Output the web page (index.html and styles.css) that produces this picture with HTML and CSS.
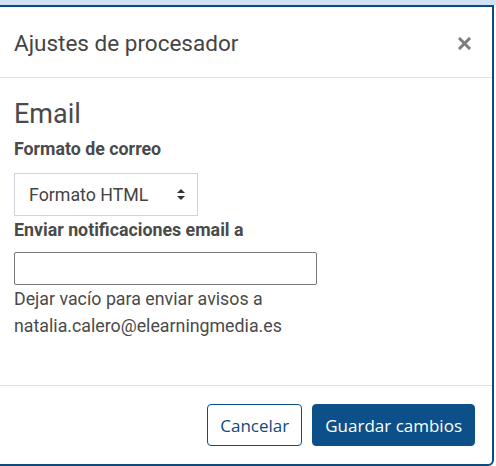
FILE: index.html
```html
<!DOCTYPE html>
<html lang="es">
<head>
  <meta charset="UTF-8">
  <title>Ajustes de procesador</title>
  <link rel="stylesheet" href="styles.css">
</head>
<body>
  <div class="modal">
    <div class="modal-header">
      <h5 class="modal-title">Ajustes de procesador</h5>
      <button class="close" aria-label="Cerrar">
        <svg width="13" height="13" viewBox="0 0 13 13"><path d="M2 2 L11 11 M11 2 L2 11" stroke="#7d7d7d" stroke-width="3" stroke-linecap="square"/></svg>
      </button>
    </div>
    <div class="modal-body">
      <h3 class="section">Email</h3>
      <label class="label" for="formato">Formato de correo</label>
      <div class="select">
        <span>Formato HTML</span>
        <svg width="8" height="11" viewBox="0 0 8 11"><path d="M4 0 L8 4 H0 Z M4 11 L8 7 H0 Z" fill="#333"/></svg>
      </div>
      <label class="label" for="email">Enviar notificaciones email a</label>
      <input class="input" type="text" id="email">
      <p class="help">Dejar vacío para enviar avisos a<br>natalia.calero@elearningmedia.es</p>
    </div>
    <div class="modal-footer">
      <button class="btn btn-outline">Cancelar</button>
      <button class="btn btn-primary">Guardar cambios</button>
    </div>
  </div>
</body>
</html>
```
FILE: styles.css
```css
body {
  margin: 0;
  background: #fff;
  border-top: 5px solid #cfe1f3;
  font-family: Roboto, "Liberation Sans", sans-serif;
  color: #4a4a4a;
}

.modal {
  box-sizing: border-box;
  width: 496px;
  height: 461px;
  margin-left: -2px;
  border: 2px solid #0d4a7e;
  border-radius: 0 0 6px 0;
  background: #fff;
  display: flex;
  flex-direction: column;
}

.modal-header {
  display: flex;
  align-items: center;
  justify-content: space-between;
  height: 70px;
  padding: 0 21px 0 14px;
  border-bottom: 1px solid #dee2e6;
}

.modal-title {
  margin: 1px 0 0;
  font-size: 22.5px;
  font-weight: 400;
  color: #444;
}

.close {
  border: 0;
  background: none;
  padding: 0;
  display: flex;
  margin-top: 3px;
}

.modal-body {
  flex: 1;
  padding: 20px 14px 0;
}

.section {
  margin: 0 0 8px;
  font-size: 27px;
  font-weight: 400;
  line-height: 32px;
  color: #4a4a4a;
}

.label {
  display: block;
  font-size: 17.8px;
  font-weight: 700;
  line-height: 22px;
  color: #4a4a4a;
}

.select {
  box-sizing: border-box;
  width: 184px;
  height: 43px;
  margin: 13px 0 3px;
  padding: 0 12px 0 14px;
  border: 1px solid #ced4da;
  display: flex;
  align-items: center;
  justify-content: space-between;
  font-size: 17.8px;
  color: #444;
}

.input {
  display: block;
  box-sizing: border-box;
  width: 303px;
  height: 33px;
  margin: 11px 0 0;
  border: 1px solid #767676;
  border-radius: 2px;
}

.help {
  margin: 0;
  font-size: 17.8px;
  line-height: 27px;
  color: #4a4a4a;
}

.modal-footer {
  display: flex;
  justify-content: flex-end;
  gap: 10px;
  padding: 18px 17px 18px;
  border-top: 1px solid #dee2e6;
}

.btn {
  height: 42px;
  padding: 0 12px;
  border-radius: 4px;
  font-family: "Open Sans", sans-serif;
  font-size: 17px;
}

.btn-outline {
  background: #fff;
  color: #0d4a7e;
  border: 1px solid #0d4a7e;
}

.btn-primary {
  background: #0d4f88;
  color: #fff;
  border: 1px solid #0d4f88;
}
```
